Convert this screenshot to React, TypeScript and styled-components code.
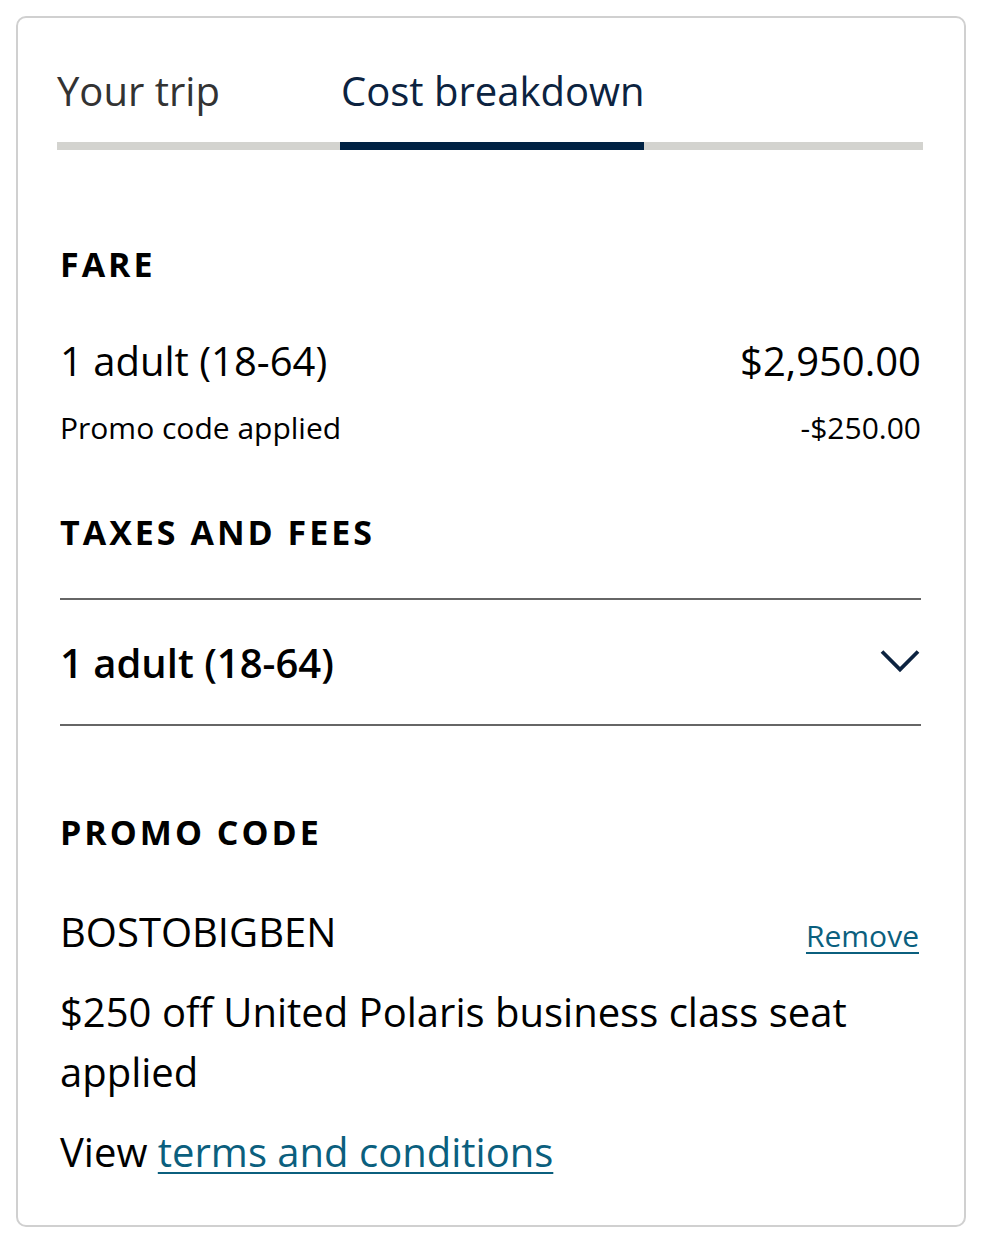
import React from "react";
import styled, { createGlobalStyle } from "styled-components";

const Global = createGlobalStyle`
  html, body { margin: 0; padding: 0; background: #fff; }
  body { font-family: "Open Sans", "Noto Sans", sans-serif; color: #000; }
  * { box-sizing: border-box; }
`;

const Page = styled.div`
  padding: 16px 19px 0 16px;
`;

const Card = styled.div`
  border: 2px solid #d0d0d0;
  border-radius: 10px;
  padding: 47px 41px 43px 39px;
`;

const Tabs = styled.div`
  display: flex;
  border-bottom: 8px solid #d3d3cf;
`;

const Tab = styled.div<{ $active?: boolean }>`
  font-size: 40px;
  line-height: 52px;
  white-space: nowrap;
  padding-bottom: 25px;
  margin-bottom: -8px;
  width: ${(p) => (p.$active ? "304px" : "283px")};
  padding-left: ${(p) => (p.$active ? "1px" : "0")};
  color: ${(p) => (p.$active ? "#0c2340" : "#333")};
  border-bottom: 8px solid ${(p) => (p.$active ? "#002244" : "transparent")};
`;

const Body = styled.div`
  padding: 0 2px 0 3px;
`;

const SectionTitle = styled.h2`
  margin: 0;
  font-size: 34px;
  font-weight: 700;
  letter-spacing: 3px;
  line-height: 44px;
`;

const Row = styled.div<{ $small?: boolean }>`
  display: flex;
  justify-content: space-between;
  align-items: baseline;
  font-size: ${(p) => (p.$small ? "30px" : "40px")};
  line-height: ${(p) => (p.$small ? "40px" : "52px")};
`;

const Accordion = styled.div`
  border-top: 2px solid #666;
  border-bottom: 2px solid #666;
  display: flex;
  justify-content: space-between;
  align-items: center;
  height: 128px;
  font-size: 40px;
  font-weight: 600;
`;

const Chevron = styled.svg`
  margin-right: 1px;
  margin-top: -2px;
`;

const Link = styled.a<{ $small?: boolean }>`
  color: #0b5f7e;
  text-decoration: underline;
  text-decoration-thickness: 2px;
  text-underline-offset: 5px;
  font-size: ${(p) => (p.$small ? "30px" : "inherit")};
  margin-right: ${(p) => (p.$small ? "2px" : "0")};
  cursor: pointer;
`;

const Para = styled.p`
  margin: 0;
  font-size: 40px;
  line-height: 60px;
`;

const Spacer = styled.div<{ $h: number }>`
  height: ${(p) => p.$h}px;
`;

export default function App() {
  return (
    <>
      <Global />
      <Page>
        <Card>
          <Tabs>
            <Tab>Your trip</Tab>
            <Tab $active>Cost breakdown</Tab>
          </Tabs>
          <Body>
            <Spacer $h={92} />
            <SectionTitle>FARE</SectionTitle>
            <Spacer $h={49} />
            <Row>
              <span>1 adult (18-64)</span>
              <span>$2,950.00</span>
            </Row>
            <Spacer $h={21} />
            <Row $small>
              <span>Promo code applied</span>
              <span>-$250.00</span>
            </Row>
            <Spacer $h={62} />
            <SectionTitle>TAXES AND FEES</SectionTitle>
            <Spacer $h={44} />
            <Accordion>
              <span>1 adult (18-64)</span>
              <Chevron width="40" height="24" viewBox="0 0 40 24" fill="none">
                <path d="M2 2.5 L20 20.5 L38 2.5" stroke="#0c2340" strokeWidth="3.8" />
              </Chevron>
            </Accordion>
            <Spacer $h={84} />
            <SectionTitle>PROMO CODE</SectionTitle>
            <Spacer $h={52} />
            <Row>
              <span>BOSTOBIGBEN</span>
              <Link $small>Remove</Link>
            </Row>
            <Spacer $h={20} />
            <Para>$250 off United Polaris business class seat applied</Para>
            <Spacer $h={20} />
            <Para>
              View <Link>terms and conditions</Link>
            </Para>
          </Body>
        </Card>
      </Page>
    </>
  );
}
